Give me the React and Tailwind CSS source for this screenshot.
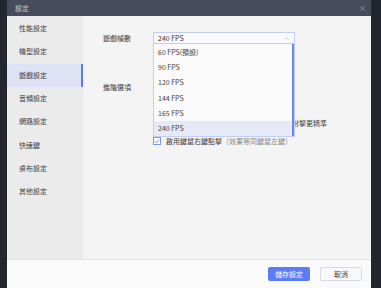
import { Check, ChevronUp, X } from 'lucide-react'

const menu = ['性能設定', '機型設定', '遊戲設定', '音頻設定', '網路設定', '快速鍵', '桌布設定', '其他設定']
const fpsOptions = ['60 FPS(預設)', '90 FPS', '120 FPS', '144 FPS', '165 FPS', '240 FPS']

function CheckBox({ checked }) {
  return (
    <div className={`w-[8px] h-[8px] border flex items-center justify-center shrink-0 ${checked ? 'border-[#7d94f3] bg-white' : 'border-[#b9bcc6] bg-white'}`}>
      {checked && <Check className="w-[7px] h-[7px] text-[#5b7cf6]" strokeWidth={3} />}
    </div>
  )
}

function OptionRow({ checked, label, note }) {
  return (
    <div className="h-[18px] flex items-center">
      <CheckBox checked={checked} />
      <span className="ml-[5px] whitespace-nowrap text-[#3c3c3c]">{label}</span>
      {note && <span className="whitespace-nowrap text-[#8a8a8a]">{note}</span>}
    </div>
  )
}

export default function App() {
  return (
    <div className="w-[381px] h-[288px] bg-[#23262e] flex font-['Noto_Sans_CJK_TC','Noto_Sans',sans-serif] text-[7px] leading-none overflow-hidden">
      <div className="w-[7px] shrink-0" />
      <div className="w-[364px] flex flex-col">
        <div className="h-[16px] bg-[#474b5b] flex items-center justify-between pl-[8px] pr-[5px]">
          <span className="text-[#c9cbd3]">設定</span>
          <X className="w-[7px] h-[7px] text-[#9a9eab]" strokeWidth={3} />
        </div>

        <div className="flex-1 flex">
          <div className="w-[76px] bg-[#ebebeb] pt-[1px]">
            {menu.map((item) => (
              <div
                key={item}
                className={`h-[23.3px] flex items-center pl-[12px] text-[#3f3f3f] ${item === '遊戲設定' ? 'bg-[#dfe2f5] border-r-[2px] border-[#5b7cf6]' : ''}`}
              >
                {item}
              </div>
            ))}
          </div>

          <div className="flex-1 bg-[#f4f4f4] relative pt-[16px] pl-[20px]">
            <div className="flex items-center">
              <span className="w-[50px] text-[#3c3c3c]">遊戲幀數</span>
              <div className="w-[142px] h-[12px] border border-[#c3cdf2] bg-[#f9faff] flex items-center justify-between pl-[4px] pr-[4px] text-[#333]">
                <span>240 FPS</span>
                <ChevronUp className="w-[7px] h-[7px] text-[#a9adb8]" strokeWidth={2} />
              </div>
            </div>

            <div className="flex mt-[34px]">
              <span className="w-[50px] h-[18px] flex items-center text-[#3c3c3c]">進階選項</span>
              <div className="flex flex-col">
                <OptionRow label="啟用垂直同步" note="（降低畫面撕裂但增加延遲）" />
                <OptionRow label="顯示FPS" />
                <OptionRow label="啟用高精度滑鼠模式，關閉滑鼠加速，使射擊更精準" />
                <OptionRow checked label="啟用鍵鼠右鍵點擊" note="（效果等同鍵鼠左鍵）" />
              </div>
            </div>

            <div className="absolute left-[70px] top-[28px] w-[142px] h-[93px] bg-[#fafafa] border-l border-b border-[#c3cdf2] flex">
              <div className="flex-1 flex flex-col">
                {fpsOptions.map((opt) => (
                  <div
                    key={opt}
                    className={`flex-1 flex items-center pl-[4px] pt-[1px] text-[#444] ${opt === '240 FPS' ? 'bg-[#e6e9f6]' : ''}`}
                  >
                    {opt}
                  </div>
                ))}
              </div>
              <div className="w-[2px] bg-[#6b86f5]" />
              <div className="w-[1px] bg-[#c3cdf2]" />
            </div>
          </div>
        </div>

        <div className="h-[29px] bg-[#fafafa] border-t border-[#e3e3e3] flex items-center justify-end gap-[10px] pr-[9px]">
          <button className="w-[42px] h-[14px] rounded-[2px] bg-[#5b7cf6] text-white flex items-center justify-center">儲存設定</button>
          <button className="w-[42px] h-[14px] rounded-[2px] bg-[#f8f9fc] border border-[#d8dbe3] text-[#333] flex items-center justify-center">取消</button>
        </div>
      </div>
    </div>
  )
}
